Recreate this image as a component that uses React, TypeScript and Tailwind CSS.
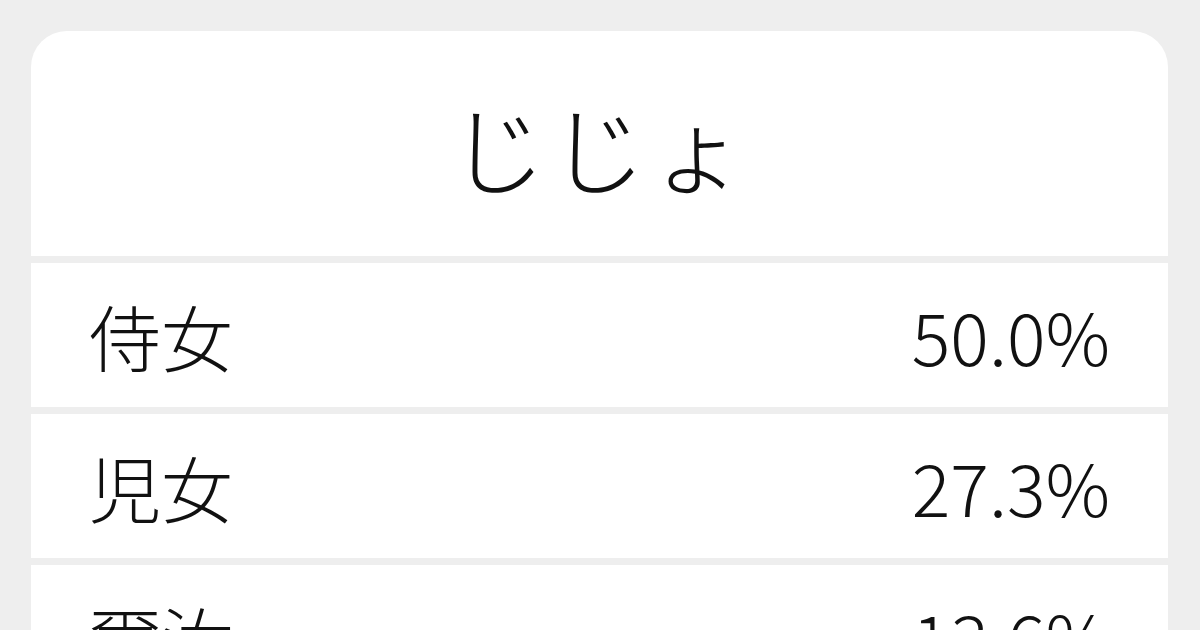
const rows = [
  { word: "侍女", rate: "50.0%" },
  { word: "児女", rate: "27.3%" },
  { word: "爾汝", rate: "13.6%" },
];

export default function App() {
  return (
    <div
      className="w-[1200px] h-[630px] overflow-hidden bg-[#eeeeee] pt-[31px] pl-[31px]"
      style={{ fontFamily: '"Noto Sans CJK JP", "Noto Sans", sans-serif' }}
    >
      <div className="w-[1137px] flex flex-col gap-[7px] rounded-t-[36px] overflow-hidden">
        <div className="h-[225px] bg-white flex items-center justify-center pt-[4px]">
          <h1 className="text-[96px] font-light text-[#111111] leading-none tracking-[4px]">じじょ</h1>
        </div>
        {rows.map((r) => (
          <div key={r.word} className="h-[144px] shrink-0 bg-white flex items-center justify-between px-[58px]">
            <span className="text-[72px] font-light text-[#111111] leading-none">{r.word}</span>
            <span className="text-[72px] font-light text-[#111111] leading-none">{r.rate}</span>
          </div>
        ))}
      </div>
    </div>
  );
}
